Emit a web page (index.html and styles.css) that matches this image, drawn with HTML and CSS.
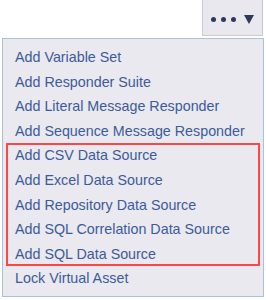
FILE: index.html
```html
<!DOCTYPE html>
<html>
<head>
<meta charset="utf-8">
<link rel="stylesheet" href="styles.css">
</head>
<body>
<div class="wrap">
  <div class="toolbar">
    <button class="more-btn" type="button">
      <span class="dots"><span class="dot"></span><span class="dot"></span><span class="dot"></span></span>
      <svg class="caret" width="10" height="9" viewBox="0 0 10 9"><polygon points="0,0 10,0 5,9" fill="#2b3a5a"/></svg>
    </button>
  </div>
  <ul class="menu">
    <li class="item">Add Variable Set</li>
    <li class="item">Add Responder Suite</li>
    <li class="item">Add Literal Message Responder</li>
    <li class="item">Add Sequence Message Responder</li>
    <li class="group">
      <ul class="group-list">
        <li class="item">Add CSV Data Source</li>
        <li class="item">Add Excel Data Source</li>
        <li class="item">Add Repository Data Source</li>
        <li class="item">Add SQL Correlation Data Source</li>
        <li class="item">Add SQL Data Source</li>
      </ul>
    </li>
    <li class="item">Lock Virtual Asset</li>
  </ul>
</div>
</body>
</html>
```

FILE: styles.css
```css
html, body {
  margin: 0;
  padding: 0;
  background: #ffffff;
}

body {
  font-family: "Liberation Sans", Arial, sans-serif;
}

.wrap {
  display: flex;
  flex-direction: column;
  width: 266px;
  height: 300px;
}

.toolbar {
  display: flex;
  justify-content: flex-end;
  padding-right: 3px;
  height: 36px;
}

.more-btn {
  box-sizing: border-box;
  width: 61px;
  height: 36px;
  margin: 0;
  padding: 4px 0 0 8px;
  border: 1px solid #c9c9cf;
  border-top: none;
  background: #e8e8ee;
  display: flex;
  align-items: center;
  gap: 8px;
  cursor: pointer;
}

.dots {
  display: flex;
  gap: 5px;
}

.dot {
  width: 5px;
  height: 5px;
  border-radius: 50%;
  background: #2b3a5a;
}

.caret {
  display: block;
}

.menu {
  list-style: none;
  box-sizing: border-box;
  margin: 2px 2px 0 2px;
  padding: 6px 0 5px 0;
  border: 1px solid #a9c2dc;
  background: #e9e9ef;
}

.item {
  height: 24.6px;
  line-height: 24.6px;
  padding-left: 12px;
  font-size: 14.3px;
  color: #3d5b99;
  white-space: nowrap;
}

.group {
  margin: 0 3px 0 3px;
  box-shadow: inset 0 0 0 2px #ff4545;
}

.group-list {
  list-style: none;
  margin: 0;
  padding: 0;
}

.group .item {
  padding-left: 9px;
}
```
